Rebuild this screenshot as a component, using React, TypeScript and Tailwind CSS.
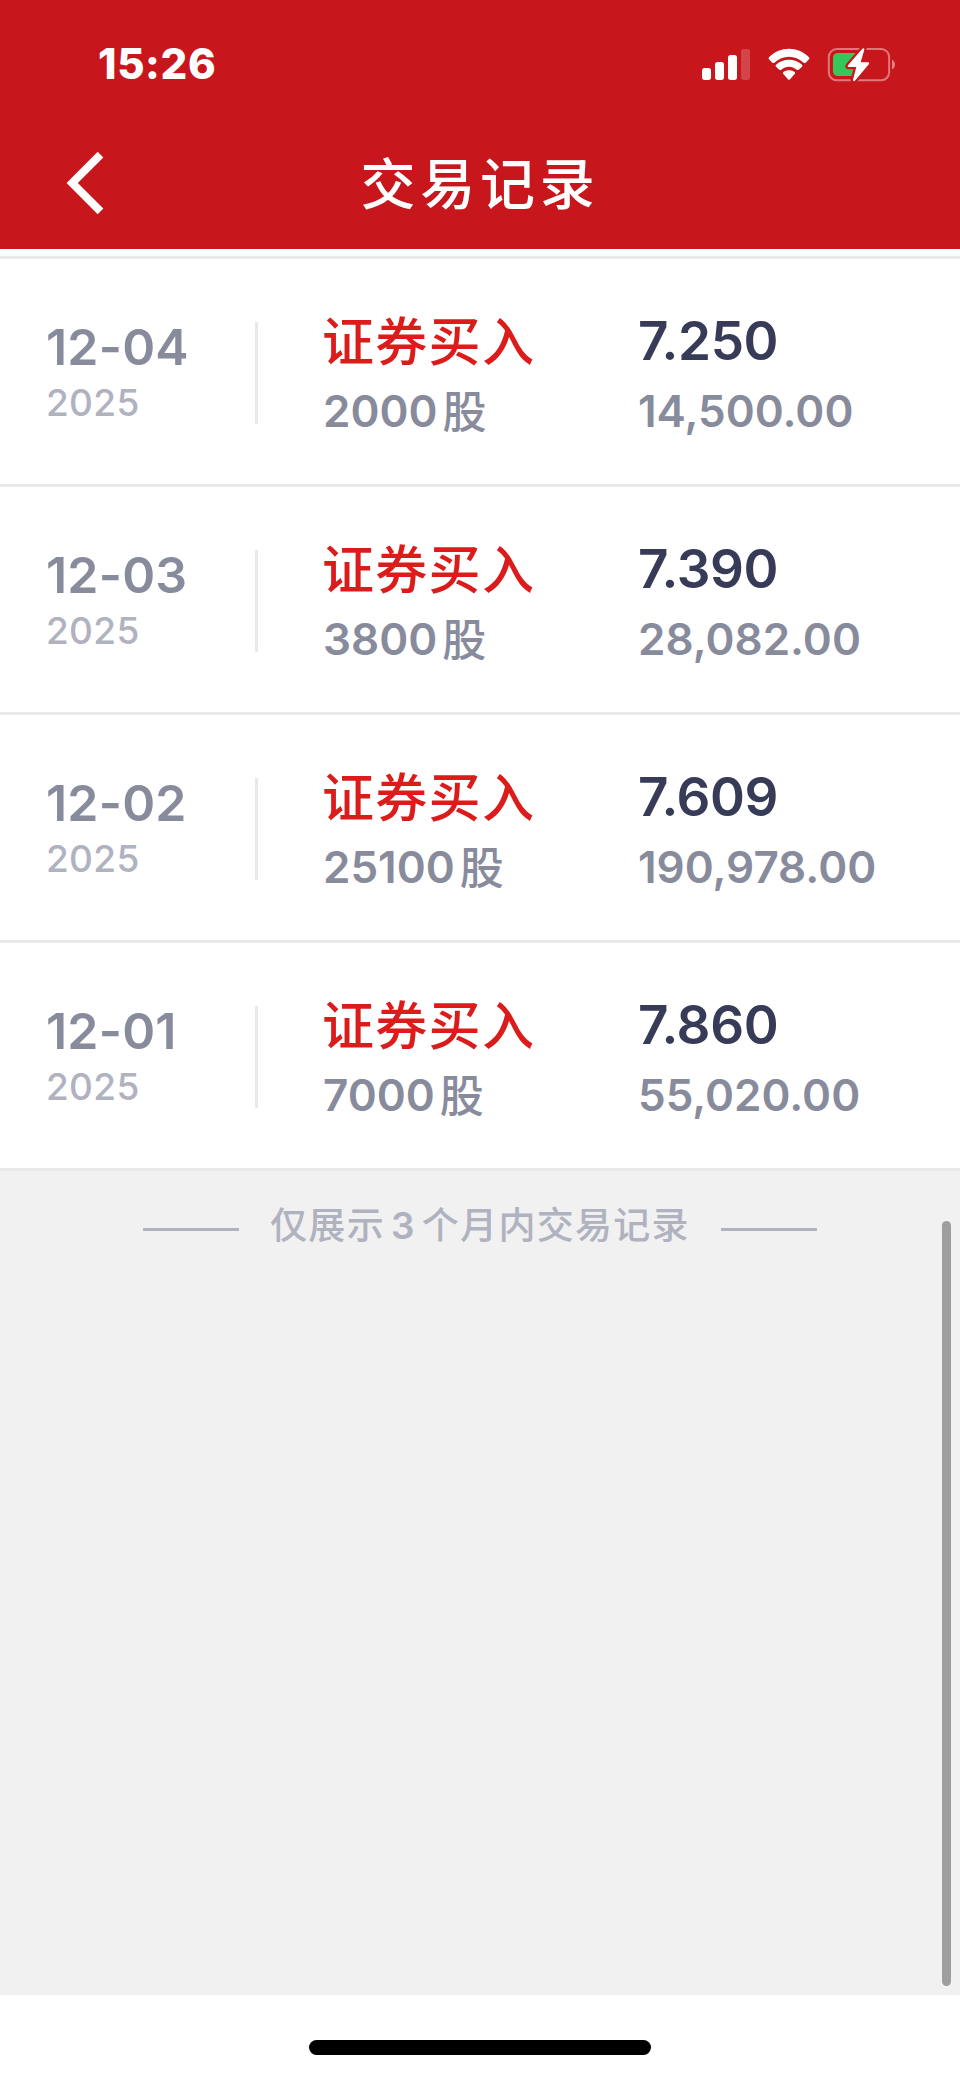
const records = [
  { date: "12-04", year: "2025", type: "证券买入", count: "2000", price: "7.250", amount: "14,500.00" },
  { date: "12-03", year: "2025", type: "证券买入", count: "3800", price: "7.390", amount: "28,082.00" },
  { date: "12-02", year: "2025", type: "证券买入", count: "25100", price: "7.609", amount: "190,978.00" },
  { date: "12-01", year: "2025", type: "证券买入", count: "7000", price: "7.860", amount: "55,020.00" },
];

const StatusIcons = () => (
  <svg viewBox="60 45 600 110" className="h-[36.67px] w-[200px]" fill="none">
    {/* signal */}
    <rect x="66" y="111" width="27" height="36" rx="8" fill="#fff" />
    <rect x="105" y="93" width="27" height="54" rx="8" fill="#fff" />
    <rect x="144" y="72" width="27" height="75" rx="8" fill="#fff" />
    <rect x="183" y="54" width="27" height="93" rx="8" fill="#fff" fillOpacity="0.2" />
    {/* wifi */}
    <path
      d="M267 79 Q264 82 267 85 L277 95 Q280 97 283 95 C308 71 346 71 371 95 Q374 97 377 95 L387 85 Q390 82 387 79 C353 45 301 45 267 79 Z"
      fill="#fff"
    />
    <path
      d="M288 101 Q285 104 288 107 L298 116 Q301 118 304 116 C317 104 337 104 350 116 Q353 118 356 116 L366 107 Q369 104 366 101 C344 81 310 81 288 101 Z"
      fill="#fff"
    />
    <path
      d="M310 123 Q307 126 310 129 L324 145 Q327 148 330 145 L344 129 Q347 126 344 123 C334 116 320 116 310 123 Z"
      fill="#fff"
    />
    {/* battery */}
    <rect x="446.500" y="54" width="181" height="94" rx="24" stroke="#fff" strokeOpacity="0.42" strokeWidth="6" />
    <path d="M636 86 C648 90 648 111 636 115 Z" fill="#fff" fillOpacity="0.45" />
    <path d="M474 66 H530 V135 H474 Q459 135 459 120 V81 Q459 66 474 66 Z" fill="#34c759" />
    <path
      d="M547 53 L504 103 Q501 108 506 108 H529 L519 146 Q519 153 525 149 L567 99 Q570 94 565 94 H542 L553 56 Q553 49 547 53 Z"
      fill="#fff"
      stroke="#c8171c"
      strokeWidth="14"
      paintOrder="stroke"
    />
  </svg>
);

const Header = () => (
  <div className="h-[249px] w-full bg-[#c8171c] text-white">
    <div className="flex h-[128px] items-center justify-between pr-[60px] pl-[98px]">
      <div className="text-[42px] leading-[60px] font-extrabold tracking-[0.600px]">15:26</div>
      <StatusIcons />
    </div>
    <div className="grid h-[110px] grid-cols-[1fr_auto_1fr] items-center">
      <svg viewBox="0 0 40 64" className="ml-[66px] h-[64px] w-[40px]" fill="none">
        <path d="M34.500 3.700 L6.200 32 L34.500 60.300" stroke="#fff" strokeWidth="8" />
      </svg>
      <div className="pt-[2px] text-[55px] leading-[80px] font-medium tracking-[4.700px]">交易记录</div>
    </div>
  </div>
);

const Record = ({ item }: { item: (typeof records)[number] }) => (
  <div className="flex h-[228px] border-b-[3px] border-[#e9e9e9] bg-white">
    <div className="w-[255px] pt-[60px] pl-[46px]">
      <div className="text-[50px] leading-[56px] font-semibold tracking-[0.200px] text-[#888b9c]">{item.date}</div>
      <div className="text-[37px] leading-[56px] font-medium tracking-[0.300px] text-[#b0b2bf]">{item.year}</div>
    </div>
    <div className="mt-[63px] h-[102px] w-[3px] bg-[#e9e9e9]" />
    <div className="w-[380px] pt-[47px] pl-[65px]">
      <div className="-ml-px pt-[3px] text-[52px] leading-[67px] font-medium tracking-[1.300px] text-[#dc1b1b]">
        {item.type}
      </div>
      <div className="flex gap-[6px] text-[44px] leading-[70px] text-[#888b9c]">
        <span className="font-semibold">{item.count}</span>
        <span className="-ml-px pt-px font-medium">股</span>
      </div>
    </div>
    <div className="pt-[47px]">
      <div className="text-[53px] leading-[70px] font-semibold tracking-[-0.400px] text-[#373b57]">{item.price}</div>
      <div className="text-[44px] leading-[70px] font-semibold text-[#888b9c]">{item.amount}</div>
    </div>
  </div>
);

const App = () => {
  return (
    <div
      lang="zh-CN"
      className="relative flex h-[2079px] w-[960px] flex-col overflow-hidden bg-[#f1f1f1] font-['Inter','Noto_Sans_CJK_SC',sans-serif]"
    >
      <Header />
      <div className="h-[10px] border-b-[3px] border-[#e9e9e9] bg-white" />
      {records.map((item) => (
        <Record key={item.date} item={item} />
      ))}
      <div className="flex flex-1 items-start justify-between px-[143px] pt-[27px] text-[#b0b2bf]">
        <div className="mt-[30px] h-[3px] w-[96px] bg-[#b0b2bf]" />
        <div className="flex text-[37px] leading-[56px] font-medium tracking-[1.300px]">
          <span>仅展示</span>
          <span className="mx-[6px] font-semibold">3</span>
          <span>个月内交易记录</span>
        </div>
        <div className="mt-[30px] h-[3px] w-[96px] bg-[#b0b2bf]" />
      </div>
      <div className="flex h-[84px] justify-center bg-white pt-[45px]">
        <div className="h-[15px] w-[342px] rounded-full bg-black" />
      </div>
      {/* scrollbar */}
      <div className="absolute top-[1221px] right-[9px] h-[765px] w-[9px] rounded-full bg-[#9e9e9e]" />
    </div>
  );
};

export default App;
